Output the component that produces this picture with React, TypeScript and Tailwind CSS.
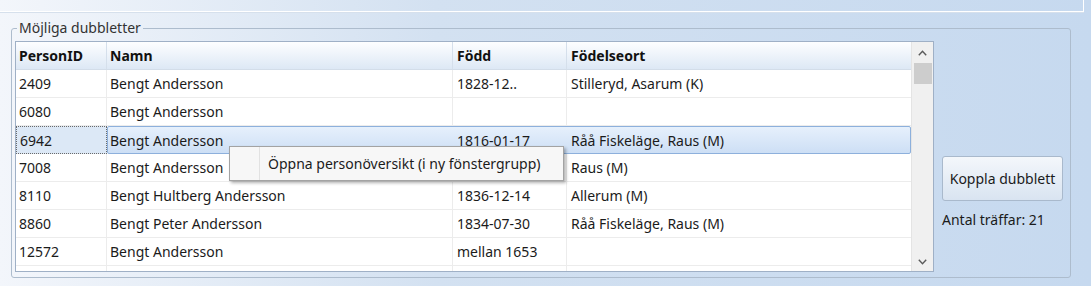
import React from "react";

type Row = { id: string; name: string; born: string; place: string; selected?: boolean };

const rows: Row[] = [
  { id: "2409", name: "Bengt Andersson", born: "1828-12..", place: "Stilleryd, Asarum (K)" },
  { id: "6080", name: "Bengt Andersson", born: "", place: "" },
  { id: "6942", name: "Bengt Andersson", born: "1816-01-17", place: "Råå Fiskeläge, Raus (M)", selected: true },
  { id: "7008", name: "Bengt Andersson", born: "", place: "Raus (M)" },
  { id: "8110", name: "Bengt Hultberg Andersson", born: "1836-12-14", place: "Allerum (M)" },
  { id: "8860", name: "Bengt Peter Andersson", born: "1834-07-30", place: "Råå Fiskeläge, Raus (M)" },
  { id: "12572", name: "Bengt Andersson", born: "mellan 1653", place: "" },
  { id: "", name: "", born: "", place: "" },
];

function Chevron({ down }: { down?: boolean }) {
  return (
    <svg width="9" height="6" viewBox="0 0 9 6" className={down ? "rotate-180" : ""}>
      <path d="M0.8 5.2 L4.5 1.3 L8.2 5.2" fill="none" stroke="#5a5a5a" strokeWidth="1.4" />
    </svg>
  );
}

function DataRow({ row }: { row: Row }) {
  if (row.selected) {
    return (
      <div className="flex h-[28px] shrink-0">
        <div className="w-[91px] flex items-center pl-[3px] bg-[#dce8f6] border border-dotted border-[#6a6a6a]">
          {row.id}
        </div>
        <div className="flex flex-1 rounded-[2px] border border-[#8db0dc] bg-gradient-to-b from-[#e6f0fc] to-[#cddff5]">
          <div className="w-[344px] flex items-center pl-[2px]">{row.name}</div>
          <div className="w-[114px] flex items-center pl-[5px]">{row.born}</div>
          <div className="flex-1 flex items-center pl-[5px]">{row.place}</div>
        </div>
      </div>
    );
  }
  return (
    <div className="flex h-[28px] shrink-0 border-b border-[#ececec]">
      <div className="w-[91px] flex items-center pl-[3px] border-r border-[#ececec]">{row.id}</div>
      <div className="w-[346px] flex items-center pl-[3px] border-r border-[#ececec]">{row.name}</div>
      <div className="w-[114px] flex items-center pl-[4px] border-r border-[#ececec]">{row.born}</div>
      <div className="flex-1 flex items-center pl-[4px]">{row.place}</div>
    </div>
  );
}

export default function App() {
  return (
    <div
      className="w-[1091px] h-[286px] overflow-hidden relative bg-gradient-to-r from-[#f3f6fb] via-[#d3e1f1] via-40% to-[#c6d9ef] text-[14px] text-[#1b1b1b]"
      style={{ fontFamily: '"Noto Sans", "Open Sans", sans-serif' }}
    >
      {/* panel above */}
      <div className="h-[12px] w-[1084px] border-b border-r border-white shadow-[0_1px_0_#d6e0ec]" />

      <div className="pt-[6px] pl-[11px]">
        <fieldset className="w-[1060px] h-[260px] border border-[#adbccd] rounded-[3px] pl-[3px] pt-[3px]">
          <legend className="ml-[2px] px-[2px] leading-[20px] text-[#333]">Möjliga dubbletter</legend>
          <div className="flex gap-[8px]">
            {/* table */}
            <div className="w-[919px] h-[231px] border border-[#9fb0c6] bg-white flex overflow-hidden">
              <div className="flex-1 flex flex-col min-w-0">
                <div className="flex h-[28px] shrink-0 font-bold border-b border-[#d3dde9] bg-gradient-to-b from-[#fdfeff] to-[#dde8f5] text-[#111]">
                  <div className="w-[91px] flex items-center pl-[3px] border-r border-[#d5dfeb]">PersonID</div>
                  <div className="w-[346px] flex items-center pl-[3px] border-r border-[#d5dfeb]">Namn</div>
                  <div className="w-[114px] flex items-center pl-[4px] border-r border-[#d5dfeb]">Född</div>
                  <div className="flex-1 flex items-center pl-[4px]">Födelseort</div>
                </div>
                {rows.map((r, i) => (
                  <DataRow key={i} row={r} />
                ))}
              </div>
              {/* scrollbar */}
              <div className="w-[22px] shrink-0 bg-[#f0f0f0] border-l border-[#e4e4e4] flex flex-col items-center">
                <div className="h-[21px] flex items-center justify-center">
                  <Chevron />
                </div>
                <div className="w-[18px] h-[21px] bg-[#cdcdcd]" />
                <div className="flex-1" />
                <div className="h-[18px] flex items-center justify-center">
                  <Chevron down />
                </div>
              </div>
            </div>

            {/* right side */}
            <div className="flex flex-col pt-[115px]">
              <button className="w-[121px] h-[45px] rounded-[3px] border border-[#a9b9cc] bg-gradient-to-b from-[#f4f7fb] to-[#d9e4f1] text-[#1b1b1b]">
                Koppla dubblett
              </button>
              <div className="mt-[9px] leading-[20px]">Antal träffar: 21</div>
            </div>
          </div>
        </fieldset>
      </div>

      {/* context menu */}
      <div className="absolute left-[229px] top-[146px] w-[335px] h-[35px] bg-[#f7f7f7] border border-[#a3a3a3] shadow-[2px_2px_3px_rgba(0,0,0,0.3)] flex">
        <div className="w-[30px] border-r border-[#e2e2e2]" />
        <div className="flex items-center pl-[8px]">Öppna personöversikt (i ny fönstergrupp)</div>
      </div>
    </div>
  );
}
